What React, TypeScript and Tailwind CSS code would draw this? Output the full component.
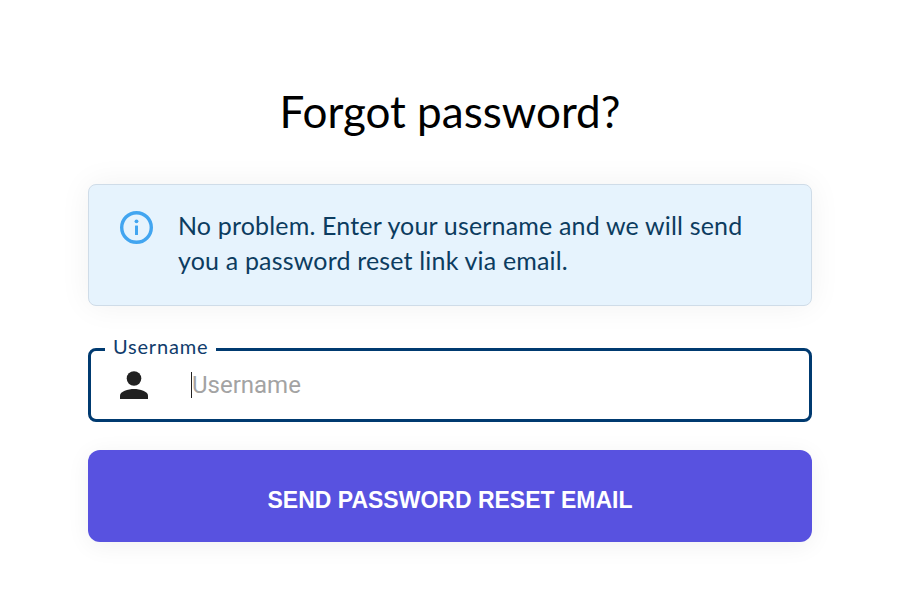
const brandFont = "font-['Lato','Noto_Sans',sans-serif]";

export default function App() {
  return (
    <div className="min-h-screen bg-white flex flex-col pl-[88px] pr-[100px] pt-[83px]">
      <h1 className={`${brandFont} text-center text-[44px] leading-[56px] font-normal text-black`}>
        Forgot password?
      </h1>

      <div className="mt-[45px] h-[122px] flex items-start rounded-lg border border-[#cfdce8] bg-[#e6f3fd] pl-[31px] pt-[23px] shadow-[0_0_32px_rgba(0,0,0,0.06)]">
        <svg className="mt-[3px] shrink-0" width="33" height="33" viewBox="0 0 33 33" fill="none">
          <circle cx="16.5" cy="16.5" r="14.8" stroke="#42a5f0" strokeWidth="3.4" />
          <rect x="15" y="14.5" width="3" height="9.5" rx="0.5" fill="#42a5f0" />
          <circle cx="16.5" cy="10.3" r="1.9" fill="#42a5f0" />
        </svg>
        <p className={`${brandFont} ml-[25px] w-[600px] text-[25px] leading-[35px] tracking-[0.17px] text-[#0c3c60]`}>
          No problem. Enter your username and we will send<br />you a password reset link via email.
        </p>
      </div>

      <div className="relative mt-[42px] h-[74px] flex items-center rounded-lg border-[3px] border-[#003a70] bg-white pl-[28px]">
        <span className={`${brandFont} absolute left-[14px] top-[-17px] bg-white px-[8px] text-[20px] leading-[24px] tracking-[0.8px] text-[#103c6c]`}>
          Username
        </span>
        <svg width="30" height="30" viewBox="0 0 30 30" fill="#212121" className="shrink-0">
          <circle cx="15" cy="8.5" r="7.3" />
          <path d="M1 29v-3.5c0-4 8-6.5 14-6.5s14 2.5 14 6.5v3.5z" />
        </svg>
        <div className="ml-[42px] flex items-center">
          <span className="h-[26px] w-px bg-[#222]" />
          <span className="font-['Roboto',sans-serif] text-[24px] leading-[30px] text-[#a3a3a3]">Username</span>
        </div>
      </div>

      <button className="mt-[28px] h-[92px] rounded-xl bg-[#5852e0] pt-[8px] font-['Liberation_Sans',sans-serif] text-[23px] font-bold text-white shadow-[0_4px_24px_rgba(0,0,0,0.06)]">
        SEND PASSWORD RESET EMAIL
      </button>
    </div>
  );
}
